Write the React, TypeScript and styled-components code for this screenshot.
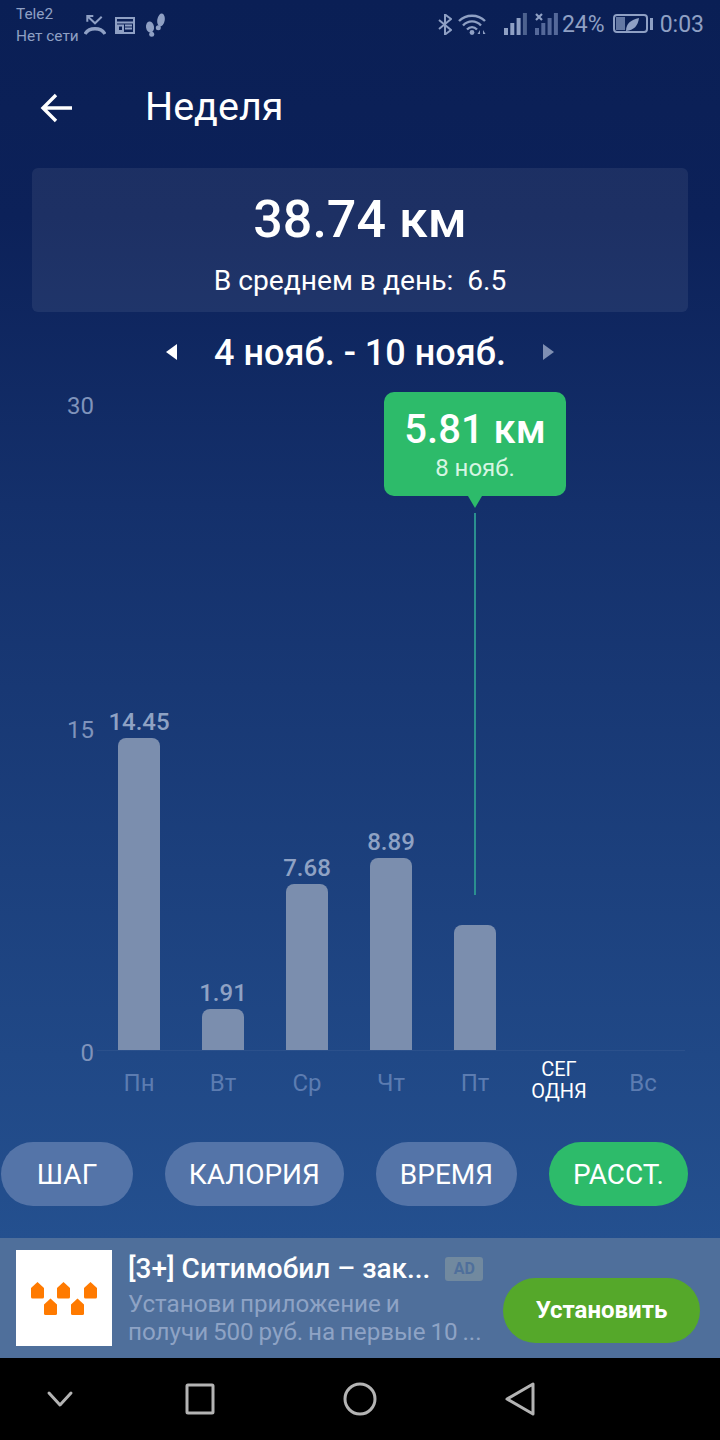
import React from 'react';
import styled, { createGlobalStyle } from 'styled-components';

const BARS = [
  { day: 'Пн', value: 14.45 },
  { day: 'Вт', value: 1.91 },
  { day: 'Ср', value: 7.68 },
  { day: 'Чт', value: 8.89 },
  { day: 'Пт', value: 5.81, selected: true },
  { day: 'СЕГ ОДНЯ', value: 0, today: true },
  { day: 'Вс', value: 0 },
];
const PX_PER_KM = 21.6;
const ICON = '#8fa0c4';

const Global = createGlobalStyle`
  html, body { margin: 0; padding: 0; background: #000; }
  * { box-sizing: border-box; }
`;

const Page = styled.div`
  width: 720px;
  height: 1440px;
  display: flex;
  flex-direction: column;
  overflow: hidden;
  font-family: Roboto, 'Noto Sans', sans-serif;
  color: #fff;
  background: linear-gradient(180deg, #0a1f55 0%, #0c2159 15%, #14306b 35%, #24508f 86%);
`;

const StatusBar = styled.div`
  height: 48px;
  padding: 3px 16px 0;
  display: flex;
  justify-content: space-between;
  color: ${ICON};
`;

const StatusGroup = styled.div`
  display: flex;
  align-items: flex-start;
`;

const Carrier = styled.div`
  width: 64px;
  font-size: 15.4px;
  line-height: 22px;
  white-space: nowrap;
`;

const Ico = styled.svg<{ $left: number; $top: number }>`
  display: block;
  flex: none;
  margin-left: ${(p) => p.$left}px;
  margin-top: ${(p) => p.$top}px;
  fill: none;
  stroke: ${ICON};
  stroke-width: 2;
`;

const StatusText = styled.span<{ $left: number }>`
  margin-left: ${(p) => p.$left}px;
  font-size: 23px;
  line-height: 44px;
`;

const Header = styled.header`
  height: 120px;
  flex: none;
  padding-left: 39px;
  display: flex;
  align-items: center;
  gap: 72px;
`;

const BackIcon = styled.svg`
  fill: none;
  stroke: #fff;
  stroke-width: 3.4;
`;

const Title = styled.h1`
  margin: -3px 0 0;
  font-size: 39.5px;
  font-weight: 400;
`;

const Summary = styled.section`
  margin: 0 32px;
  height: 144px;
  flex: none;
  border-radius: 6px;
  background: rgba(255, 255, 255, 0.07);
  display: flex;
  flex-direction: column;
  align-items: center;
  padding-top: 20px;
`;

const Total = styled.div`
  font-size: 52px;
  line-height: 64px;
  font-weight: 500;
`;

const Average = styled.div`
  margin-top: 12px;
  font-size: 28.2px;
  line-height: 34px;
  white-space: pre;
`;

const DateRow = styled.div`
  height: 80px;
  flex: none;
  display: flex;
  align-items: center;
  justify-content: center;
  gap: 36px;
`;

const DateLabel = styled.div`
  padding-top: 2px;
  font-size: 36px;
  font-weight: 500;
`;

const Caret = styled.svg<{ $dim?: boolean }>`
  width: 13px;
  height: 16px;
  fill: ${(p) => (p.$dim ? '#7f8fb3' : '#fff')};
`;

const Chart = styled.section`
  position: relative;
  height: 659px;
  flex: none;
  margin-left: 97px;
  width: 588px;
  display: grid;
  grid-template-columns: repeat(7, 84px);
  align-items: end;
  border-bottom: 1px solid rgba(255, 255, 255, 0.05);
`;

const AxisLabel = styled.span<{ $bottom: number }>`
  position: absolute;
  right: 100%;
  margin-right: 3px;
  bottom: ${(p) => p.$bottom}px;
  font-size: 24px;
  line-height: 28px;
  color: #7f93bb;
`;

const Column = styled.div`
  position: relative;
  display: flex;
  flex-direction: column;
  align-items: center;
`;

const BarValue = styled.span`
  margin-bottom: 2px;
  font-size: 24px;
  line-height: 28px;
  font-weight: 500;
  color: #8fa2c4;
`;

const Bar = styled.div`
  width: 42px;
  border-radius: 8px 8px 0 0;
  background: #7b8eae;
`;

const Bubble = styled.div`
  position: absolute;
  left: 287px;
  top: 0;
  width: 182px;
  height: 104px;
  border-radius: 10px;
  background: #2dbb6a;
  display: flex;
  flex-direction: column;
  align-items: center;
  padding-top: 14px;

  &::after {
    content: '';
    position: absolute;
    left: 84px;
    top: 104px;
    border: 7px solid transparent;
    border-top: 12px solid #2dbb6a;
    border-bottom: 0;
  }
`;

const BubbleValue = styled.div`
  font-size: 40px;
  line-height: 48px;
  font-weight: 500;
`;

const BubbleDate = styled.div`
  font-size: 24px;
  line-height: 28px;
  color: #d6f5e2;
`;

const Marker = styled.div`
  position: absolute;
  left: 377px;
  top: 121px;
  width: 2px;
  height: 382px;
  background: #2b8f8f;
`;

const Days = styled.div`
  margin-left: 97px;
  width: 588px;
  height: 91px;
  flex: none;
  display: grid;
  grid-template-columns: repeat(7, 84px);
  align-items: start;
  padding-top: 7px;
`;

const Day = styled.span<{ $today?: boolean }>`
  text-align: center;
  font-size: ${(p) => (p.$today ? 20 : 24)}px;
  line-height: ${(p) => (p.$today ? 22 : 50)}px;
  width: ${(p) => (p.$today ? '60px' : 'auto')};
  justify-self: center;
  color: ${(p) => (p.$today ? '#fff' : '#5c7cb1')};
`;

const Tabs = styled.nav`
  height: 96px;
  flex: none;
  display: flex;
  justify-content: space-between;
  padding: 0 32px 0 1px;
`;

const Tab = styled.div<{ $active?: boolean }>`
  height: 64px;
  min-width: 132px;
  padding: 1px 24px 0;
  border-radius: 32px;
  display: flex;
  align-items: center;
  justify-content: center;
  font-size: 28px;
  background: ${(p) => (p.$active ? '#2dbb6a' : '#5474a8')};
`;

const Ad = styled.aside`
  height: 120px;
  flex: none;
  display: flex;
  align-items: center;
  padding: 0 20px 0 16px;
  background: #4f6f9b;
`;

const AdLogo = styled.div`
  width: 96px;
  height: 96px;
  flex: none;
  background: #fff;
  display: flex;
  align-items: center;
  justify-content: center;
`;

const AdText = styled.div`
  width: 360px;
  margin-left: 16px;
`;

const AdTitleRow = styled.div`
  display: flex;
  align-items: center;
  gap: 15px;
  margin-bottom: 3px;
`;

const AdTitle = styled.div`
  font-size: 28px;
  line-height: 36px;
  font-weight: 500;
  white-space: nowrap;
`;

const AdBadge = styled.span`
  width: 38px;
  height: 24px;
  border-radius: 3px;
  background: #71899f;
  color: #4f6f9b;
  font-size: 16px;
  font-weight: 700;
  display: flex;
  align-items: center;
  justify-content: center;
`;

const AdBody = styled.div`
  font-size: 24.2px;
  word-spacing: -1.2px;
  line-height: 28px;
  color: #8ea3c5;
  white-space: nowrap;
`;

const Install = styled.div`
  width: 197px;
  height: 65px;
  margin: 24px 0 0 auto;
  border-radius: 33px;
  background: #55a82a;
  display: flex;
  align-items: center;
  justify-content: center;
  font-size: 24px;
  font-weight: 700;
`;

const NavBar = styled.div`
  flex: 1;
  background: #000;
  display: grid;
  grid-template-columns: 120px repeat(3, 160px);
  align-items: center;
  justify-items: center;
`;

const NavIcon = styled.svg`
  fill: none;
  stroke: #b4b4b4;
  stroke-width: 3;
  stroke-linejoin: round;
  stroke-linecap: round;
`;

const House = ({ x, y }: { x: number; y: number }) => (
  <path
    transform={`translate(${x} ${y})`}
    d="M0 6 L6.5 0 L13 6 V15 Q13 16.5 11.5 16.5 H1.5 Q0 16.5 0 15 Z"
    fill="#ff7a00"
  />
);

const SignalBars = ({ muted, left }: { muted?: boolean; left: number }) => (
  <Ico $left={left} $top={10} width="23" height="22" viewBox="0 0 23 22">
    {[0, 1, 2, 3].map((i) => (
      <rect
        key={i}
        x={i * 6.3}
        y={15 - i * 5}
        width="4"
        height={7 + i * 5}
        fill={muted ? '#55699a' : i === 3 ? '#4d628f' : ICON}
        stroke="none"
      />
    ))}
    {muted && <path d="M1 1 L7 7 M7 1 L1 7" strokeWidth="2.2" />}
  </Ico>
);

export default function App() {
  return (
    <Page>
      <Global />
      <StatusBar>
        <StatusGroup>
          <Carrier>Tele2<br />Нет сети</Carrier>
          <Ico $left={4} $top={11} width="22" height="22" viewBox="0 0 22 22">
            <path d="M3.3 7.7 V2 H9.3 M3.3 2 L11 9.3 L17.7 2.7" />
            <path d="M1 20 C5 13 17 13 21 20" strokeWidth="3.4" />
          </Ico>
          <Ico $left={9} $top={13} width="20" height="18" viewBox="0 0 20 18">
            <rect x="1" y="2" width="18" height="15" />
            <path d="M1 6.5 H19 M10 9.5 H17 M10 12.5 H17 M3 9.5 H8 V15 H3 Z" />
          </Ico>
          <Ico $left={10} $top={10} width="21" height="24" viewBox="0 0 21 24">
            <ellipse cx="5" cy="14" rx="4" ry="5.5" fill={ICON} stroke="none" transform="rotate(-8 5 14)" />
            <circle cx="6.7" cy="21.3" r="2.5" fill={ICON} stroke="none" />
            <ellipse cx="16" cy="7" rx="3.7" ry="6.5" fill={ICON} stroke="none" transform="rotate(10 16 7)" />
            <circle cx="13.3" cy="14.7" r="2.5" fill={ICON} stroke="none" />
          </Ico>
        </StatusGroup>
        <StatusGroup>
          <Ico $left={0} $top={11} width="14" height="21" viewBox="0 0 14 21">
            <path d="M1 6 L13 16 L7 20.5 V0.5 L13 5 L1 15" />
          </Ico>
          <Ico $left={6} $top={10} width="28" height="22" viewBox="0 0 28 22">
            <path d="M1 8 C8 1 20 1 27 8 M5 12.5 C10 7 18 7 23 12.5 M9 16.5 C12 13.5 16 13.5 19 16.5" strokeWidth="2.4" />
            <circle cx="14" cy="19.5" r="2.4" fill={ICON} stroke="none" />
            <path d="M22 17 L19.5 21 H22 Z M25 17 L27.5 21 H25 Z" fill={ICON} stroke="none" />
          </Ico>
          <SignalBars left={18} />
          <SignalBars left={8} muted />
          <StatusText $left={4}>24%</StatusText>
          <Ico $left={8} $top={11} width="35" height="19" viewBox="0 0 35 19">
            <rect x="1" y="1" width="33" height="17" rx="3" />
            <rect x="3" y="3" width="9" height="13" fill="#6478a3" stroke="none" />
            <path d="M13 17 C13 9 18 6 26 4 C25 12 21 16 13 17 Z" fill={ICON} stroke="none" />
          </Ico>
          <Ico $left={2} $top={15} width="3" height="12" viewBox="0 0 3 12">
            <rect width="3" height="12" fill={ICON} stroke="none" />
          </Ico>
          <StatusText $left={7}>0:03</StatusText>
        </StatusGroup>
      </StatusBar>

      <Header>
        <BackIcon width="34" height="32" viewBox="0 0 34 32">
          <path d="M33 16 H4 M17 3 L4 16 L17 29" />
        </BackIcon>
        <Title>Неделя</Title>
      </Header>

      <Summary>
        <Total>38.74 км</Total>
        <Average>В среднем в день:  6.5</Average>
      </Summary>

      <DateRow>
        <Caret viewBox="0 0 13 16"><path d="M12 0 V16 L1 8 Z" /></Caret>
        <DateLabel>4 нояб. - 10 нояб.</DateLabel>
        <Caret $dim viewBox="0 0 13 16"><path d="M1 0 V16 L12 8 Z" /></Caret>
      </DateRow>

      <Chart>
        <AxisLabel $bottom={630}>30</AxisLabel>
        <AxisLabel $bottom={306}>15</AxisLabel>
        <AxisLabel $bottom={-17}>0</AxisLabel>
        {BARS.map((b) => (
          <Column key={b.day}>
            {b.value > 0 && !b.selected && <BarValue>{b.value}</BarValue>}
            {b.value > 0 && <Bar style={{ height: b.value * PX_PER_KM }} />}
          </Column>
        ))}
        <Bubble>
          <BubbleValue>5.81 км</BubbleValue>
          <BubbleDate>8 нояб.</BubbleDate>
        </Bubble>
        <Marker />
      </Chart>

      <Days>
        {BARS.map((b) => (
          <Day key={b.day} $today={b.today}>{b.day}</Day>
        ))}
      </Days>

      <Tabs>
        <Tab>ШАГ</Tab>
        <Tab>КАЛОРИЯ</Tab>
        <Tab>ВРЕМЯ</Tab>
        <Tab $active>РАССТ.</Tab>
      </Tabs>

      <Ad>
        <AdLogo>
          <svg width="66" height="33" viewBox="0 0 66 33">
            <House x={0} y={0} />
            <House x={26} y={0} />
            <House x={53} y={0} />
            <House x={13} y={16.5} />
            <House x={40} y={16.5} />
          </svg>
        </AdLogo>
        <AdText>
          <AdTitleRow>
            <AdTitle>[3+] Ситимобил – зак...</AdTitle>
            <AdBadge>AD</AdBadge>
          </AdTitleRow>
          <AdBody>Установи приложение и</AdBody>
          <AdBody>получи 500 руб. на первые 10 ...</AdBody>
        </AdText>
        <Install>Установить</Install>
      </Ad>

      <NavBar>
        <NavIcon width="28" height="18" viewBox="0 0 28 18"><path d="M3 3 L14 15 L25 3" /></NavIcon>
        <NavIcon width="30" height="32" viewBox="0 0 30 32"><rect x="2" y="2" width="26" height="28" rx="1" /></NavIcon>
        <NavIcon width="34" height="34" viewBox="0 0 34 34"><circle cx="17" cy="17" r="15" /></NavIcon>
        <NavIcon width="30" height="34" viewBox="0 0 30 34"><path d="M28 2 V32 L2 17 Z" /></NavIcon>
      </NavBar>
    </Page>
  );
}
